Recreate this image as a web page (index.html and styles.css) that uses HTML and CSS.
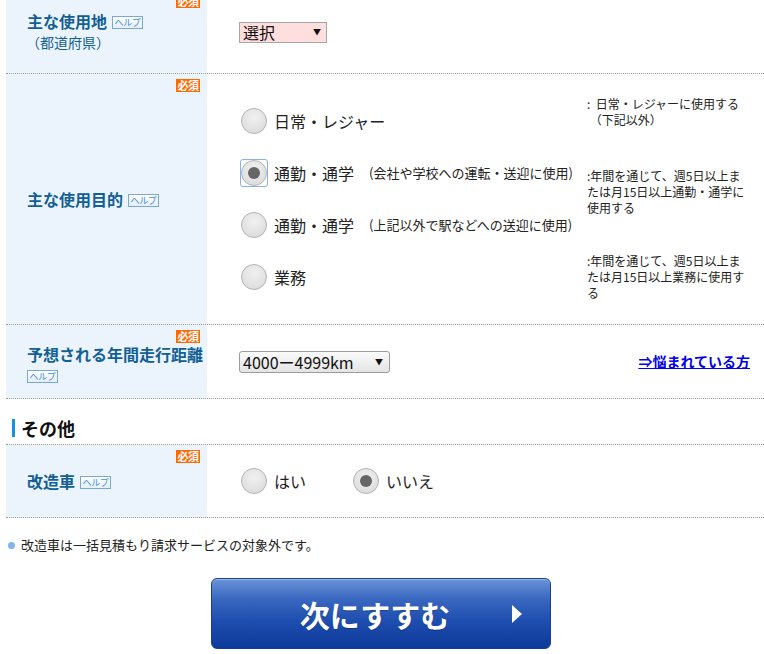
FILE: index.html
```html
<!DOCTYPE html>
<html lang="ja">
<head>
<meta charset="utf-8">
<title>車両の使用状況</title>
<link rel="stylesheet" href="styles.css">
</head>
<body>
<main class="page">
  <form class="form">
    <div class="row row-top">
      <div class="label">
        <span class="req">必須</span>
        <p class="title">主な使用地<span class="help">ヘルプ</span></p>
        <p class="sub">（都道府県）</p>
      </div>
      <div class="field">
        <span class="select select-pref"><select><option>選択</option></select></span>
      </div>
    </div>

    <div class="row row-purpose">
      <div class="label">
        <span class="req">必須</span>
        <p class="title">主な使用目的<span class="help">ヘルプ</span></p>
      </div>
      <div class="field">
        <div class="purpose">
          <label class="opt o1"><input type="radio" class="radio" name="purpose"><span>日常・レジャー</span></label>
          <label class="opt o2"><span class="focus"><input type="radio" class="radio" name="purpose" checked></span><span>通勤・通学</span><small>(会社や学校への運転・送迎に使用)</small></label>
          <label class="opt o3"><input type="radio" class="radio" name="purpose"><span>通勤・通学</span><small>(上記以外で駅などへの送迎に使用)</small></label>
          <label class="opt o4"><input type="radio" class="radio" name="purpose"><span>業務</span></label>
          <p class="note n1">:&nbsp;&nbsp;日常・レジャーに使用する<br>&nbsp;（下記以外）</p>
          <p class="note n2">:年間を通じて、週5日以上ま<br>たは月15日以上通勤・通学に<br>使用する</p>
          <p class="note n3">:年間を通じて、週5日以上ま<br>たは月15日以上業務に使用す<br>る</p>
        </div>
      </div>
    </div>

    <div class="row row-distance">
      <div class="label">
        <span class="req">必須</span>
        <p class="title">予想される年間走行距離<span class="help">ヘルプ</span></p>
      </div>
      <div class="field field-split">
        <span class="select select-km"><select><option>4000ー4999km</option></select></span>
        <a class="guide" href="#">⇒悩まれている方</a>
      </div>
    </div>

    <h2 class="section-head">その他</h2>

    <div class="row row-mod">
      <div class="label">
        <span class="req">必須</span>
        <p class="title">改造車<span class="help">ヘルプ</span></p>
      </div>
      <div class="field">
        <div class="yesno">
          <label class="opt"><input type="radio" class="radio" name="mod"><span>はい</span></label>
          <label class="opt"><input type="radio" class="radio" name="mod" checked><span>いいえ</span></label>
        </div>
      </div>
    </div>
  </form>

  <p class="notice">改造車は一括見積もり請求サービスの対象外です。</p>

  <div class="actions">
    <button class="next" type="button">次にすすむ<span class="next-arrow"></span></button>
  </div>
</main>
</body>
</html>
```

FILE: styles.css
```css
* {
  box-sizing: border-box;
}

html,
body {
  margin: 0;
  padding: 0;
  background: #fff;
}

body {
  font-family: "Noto Sans CJK JP", "Noto Sans", sans-serif;
  color: #222;
  overflow: hidden;
}

p {
  margin: 0;
}

.page {
  width: 764px;
}

.form {
  padding-left: 6px;
}

/* form rows */
.row {
  display: flex;
  border-bottom: 1px dotted #999;
}

.row-top {
  margin-top: -10px;
  height: 84px;
}

.row-purpose {
  height: 251px;
}

.row-distance {
  height: 74px;
}

.row-mod {
  height: 74px;
  border-top: 1px dotted #999;
}

/* label column */
.label {
  position: relative;
  width: 201px;
  flex: none;
  background: #ebf4fc;
  padding-left: 21px;
  display: flex;
  flex-direction: column;
  justify-content: center;
  color: #135f94;
}

.title {
  font-size: 16px;
  font-weight: bold;
  line-height: 20px;
}

.row-distance .title {
  line-height: 19px;
  padding-top: 5px;
}

.sub {
  font-size: 14px;
  line-height: 20px;
  margin-top: 1px;
  margin-left: -1px;
}

.req {
  position: absolute;
  top: 5px;
  right: 7px;
  width: 24px;
  height: 13px;
  background: #ff6a00;
  color: #fff;
  font-size: 11px;
  font-weight: bold;
  line-height: 13px;
  text-align: center;
  letter-spacing: -0.5px;
}

.help {
  display: inline-block;
  margin-left: 5px;
  width: 31px;
  height: 13px;
  border: 1px solid #79a7dc;
  background: linear-gradient(#ffffff, #e6eef8);
  color: #3b8fe2;
  font-size: 9px;
  font-weight: normal;
  line-height: 11px;
  text-align: center;
  vertical-align: 2px;
  letter-spacing: -0.3px;
}

.row-distance .help {
  margin-left: 0;
  vertical-align: 0;
}

/* value column */
.field {
  flex: 1;
  display: flex;
  align-items: center;
  padding: 0 14px 0 32px;
}

.field-split {
  justify-content: space-between;
}

/* selects */
.select {
  position: relative;
  display: inline-block;
}

.select select {
  -webkit-appearance: none;
  appearance: none;
  font-family: "Noto Sans CJK JP", sans-serif;
  font-size: 16px;
  color: #111;
  margin: 0;
  border: 1px solid #a6a6a6;
  padding: 0 0 0 3px;
  outline: none;
}

.select::after {
  content: "▼";
  position: absolute;
  top: 50%;
  transform: translateY(-50%);
  font-size: 8px;
  line-height: 8px;
  color: #111;
  pointer-events: none;
}

.select-pref select {
  width: 88px;
  height: 21px;
  line-height: 19px;
  background: #ffdede;
}

.select-pref::after {
  right: 6px;
}

.select-km select {
  width: 151px;
  height: 22px;
  line-height: 20px;
  border-radius: 3px;
  border-color: #9c9c9c;
  background: linear-gradient(#fbfbfb, #e4e4e4);
}

.select-km::after {
  right: 7px;
}

.guide {
  font-size: 14px;
  font-weight: bold;
  color: #0000ee;
  text-decoration: underline;
  line-height: 18px;
  margin-top: -2px;
}

/* radio buttons */
.radio {
  -webkit-appearance: none;
  appearance: none;
  flex: none;
  width: 26px;
  height: 26px;
  margin: 0;
  border: 1px solid #b3b3b3;
  border-radius: 50%;
  background: radial-gradient(circle at 50% 35%, #f0f0f0 0%, #e2e2e2 60%, #d6d6d6 100%);
  display: grid;
  place-content: center;
  outline: none;
}

.radio:checked::before {
  content: "";
  width: 12px;
  height: 12px;
  border-radius: 50%;
  background: #666;
}

.focus {
  display: inline-flex;
  border: 1px solid #86b1ee;
  border-radius: 3px;
  margin-left: -1px;
  margin-right: -1px;
}

.opt {
  display: flex;
  align-items: center;
  gap: 7px;
  font-size: 16px;
  line-height: 20px;
  color: #222;
}

.opt small {
  font-size: 13px;
  margin-left: 8px;
  color: #222;
}

.purpose {
  display: grid;
  grid-template-columns: 348px 1fr;
  grid-template-rows: repeat(4, 52px);
  width: 100%;
}

.purpose .opt {
  grid-column: 1;
  padding-left: 2px;
}

.o1 { grid-row: 1; }
.o2 { grid-row: 2; }
.o3 { grid-row: 3; }
.o4 { grid-row: 4; }

.note {
  grid-column: 2;
  align-self: start;
  font-size: 12px;
  line-height: 16px;
  color: #222;
  white-space: nowrap;
}

.n1 { grid-row: 1; margin-top: 1px; }
.n2 { grid-row: 2 / span 2; margin-top: 21px; }
.n3 { grid-row: 4; margin-top: 2px; }

.yesno {
  display: flex;
  gap: 47px;
  padding-left: 2px;
}

/* section heading */
.section-head {
  margin: 0;
  height: 45px;
  display: flex;
  align-items: flex-end;
  gap: 6px;
  padding: 0 0 6px 6px;
  font-size: 18px;
  font-weight: bold;
  line-height: 20px;
  color: #111;
}

.section-head::before {
  content: "";
  width: 3px;
  height: 18px;
  margin-bottom: 1px;
  background: #1592e0;
}

/* footnote */
.notice {
  display: flex;
  align-items: center;
  gap: 6px;
  margin: 17px 0 0 8px;
  font-size: 13px;
  line-height: 20px;
  color: #222;
}

.notice::before {
  content: "";
  width: 7px;
  height: 7px;
  border-radius: 50%;
  background: #7fb5ec;
}

/* submit button */
.actions {
  display: flex;
  justify-content: center;
  margin-top: 23px;
  padding-right: 3px;
}

.next {
  position: relative;
  width: 340px;
  height: 71px;
  border: 1px solid #173f95;
  border-radius: 6px;
  background: linear-gradient(#6a93d6 0%, #3866c0 30%, #1e4eaf 60%, #0c3a9b 100%);
  box-shadow: inset 0 1px 0 rgba(255, 255, 255, 0.35);
  color: #fff;
  font-family: "Noto Sans CJK JP", sans-serif;
  font-size: 30px;
  font-weight: bold;
  line-height: 40px;
  padding: 0 11px 0 0;
  cursor: pointer;
  text-shadow: 0 1px 1px rgba(0, 0, 0, 0.25);
}

.next-arrow {
  position: absolute;
  right: 28px;
  top: 50%;
  margin-top: -9px;
  width: 0;
  height: 0;
  border-left: 10px solid #fff;
  border-top: 9px solid transparent;
  border-bottom: 9px solid transparent;
}
```
